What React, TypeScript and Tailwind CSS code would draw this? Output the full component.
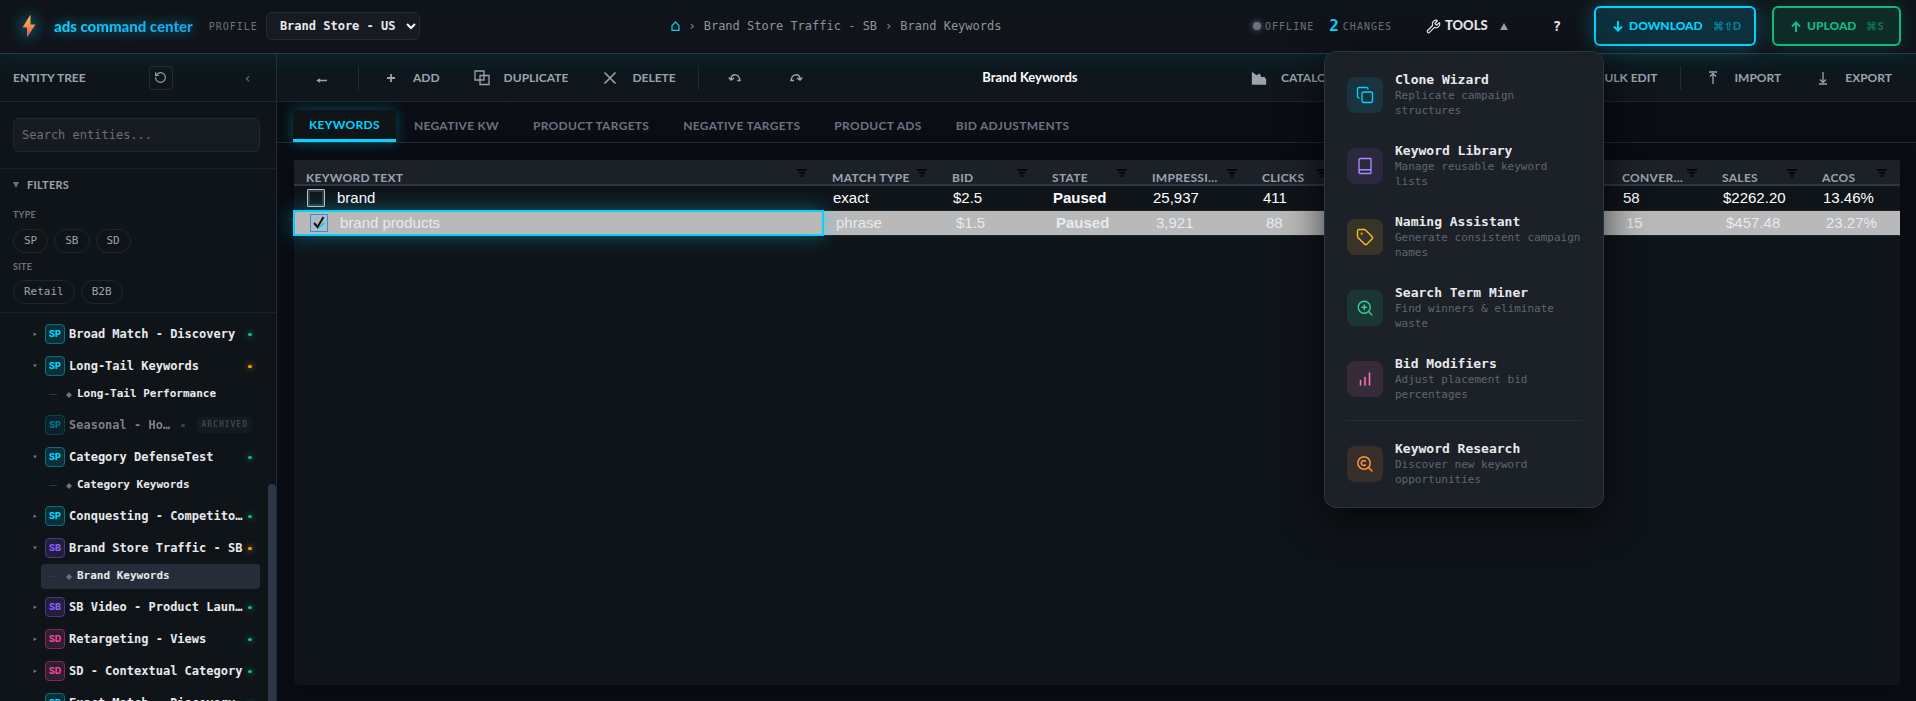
import React from 'react';
import { Wrench, Copy, Book, Tag, ZoomIn, RotateCcw } from 'lucide-react';
import clsx from 'clsx';

const mono = "font-['DejaVu_Sans_Mono',monospace]";

const Bolt = () => (
  <svg viewBox="0 0 14 24" className="h-6 w-[14px] drop-shadow-[0_0_8px_#00d4ff]">
    <defs>
      <linearGradient id="bolt" x1="0" y1="0" x2="0" y2="1">
        <stop offset="0" stopColor="#fbbf3c" />
        <stop offset="0.55" stopColor="#f9884a" />
        <stop offset="1" stopColor="#e5446d" />
      </linearGradient>
    </defs>
    <path d="M8.5 0.5 L0.5 13.5 H5 V23.5 L13.5 10.5 H8.5 Z" fill="url(#bolt)" />
  </svg>
);

const FilterIcon = () => (
  <svg viewBox="0 0 10 8" className="h-2 w-[10px]" stroke="#050608" strokeWidth="2">
    <path d="M0 1H10M2 4H8M3.5 7H6.5" />
  </svg>
);

const BarsIcon = () => (
  <svg viewBox="0 0 16 16" className="h-4 w-4" fill="none" stroke="currentColor" strokeWidth="1.6" strokeLinecap="round">
    <path d="M3.5 9.5V14M8 6.5V14M12.5 2V14" />
  </svg>
);

const ResearchIcon = () => (
  <svg viewBox="0 0 18 18" className="h-[18px] w-[18px]" fill="none" stroke="currentColor" strokeWidth="1.5" strokeLinecap="round">
    <circle cx="8" cy="8" r="6.2" />
    <path d="M12.6 12.6L16 16M9.3 6.2A2.4 2.4 0 1 0 9.3 9.9" />
  </svg>
);

const icons = {
  back: <path d="M3 10.5H13M3.5 10.5L5.5 9.3V11.7Z" />,
  add: <path d="M8 4V12M4 8H12" strokeWidth="1.8" />,
  duplicate: <path d="M1 1H10V10H1ZM6 5.5H15V14.5H6Z" />,
  del: <path d="M2.5 2.5L13.5 13.5M13.5 2.5L2.5 13.5" strokeWidth="1.6" />,
  undo: <path d="M4 9C4.5 3.5 12 3 13 10.5H10M1.8 7.5L4 10L7 8.2" strokeWidth="1.5" />,
  redo: <path d="M12 9C11.5 3.5 4 3 3 10.5H6M14.2 7.5L12 10L9 8.2" strokeWidth="1.5" />,
  catalog: <path d="M1.5 3L5.5 6L8.5 4.5L10 8L13 7.5L14.5 9.5V14H1.5Z" fill="currentColor" />,
  up: <path d="M4 2H12M8 14V3M8 3.5L5 6.5M8 3.5L11 6.5" />,
  down: <path d="M4 14H12M8 2V13M8 12.5L5 9.5M8 12.5L11 9.5" />,
};

type ToolProps = { icon: keyof typeof icons; label?: string; title?: string; className?: string };

const Tool = ({ icon, label, title, className }: ToolProps) => (
  <button
    type="button"
    aria-label={title}
    className={clsx(
      'flex h-8 items-center justify-center gap-[14px] text-xs font-bold text-[#9ca3af]',
      label ? 'pl-4 pr-[14px]' : 'w-[57px]',
      className,
    )}
  >
    <svg viewBox="0 0 16 16" className="h-4 w-4" fill="none" stroke="currentColor" strokeWidth="1.3">
      {icons[icon]}
    </svg>
    {label}
  </button>
);

const Separator = () => <div className="mx-1 h-6 w-px bg-[#222a33]" />;

const tools = [
  { title: 'Clone Wizard', text: 'Replicate campaign structures', icon: <Copy size={18} strokeWidth={1.8} />, tone: 'bg-[#1a343f] text-[#00d4ff]' },
  { title: 'Keyword Library', text: 'Manage reusable keyword lists', icon: <Book size={18} strokeWidth={1.8} />, tone: 'bg-[#2c2840] text-[#a78bfa]' },
  { title: 'Naming Assistant', text: 'Generate consistent campaign names', icon: <Tag size={18} strokeWidth={1.8} />, tone: 'bg-[#393428] text-[#fbbf24]' },
  { title: 'Search Term Miner', text: 'Find winners & eliminate waste', icon: <ZoomIn size={18} strokeWidth={1.8} />, tone: 'bg-[#1c3535] text-[#34d399]' },
  { title: 'Bid Modifiers', text: 'Adjust placement bid percentages', icon: <BarsIcon />, tone: 'bg-[#372a39] text-[#f472b6]' },
  { title: 'Keyword Research', text: 'Discover new keyword opportunities', icon: <ResearchIcon />, tone: 'bg-[#382e2a] text-[#fb923c]' },
];

const ToolsMenu = () => (
  <div className="absolute left-1/2 top-full z-20 mt-[7px] w-[280px] -translate-x-1/2 rounded-xl border border-[#2a3542] bg-[#1c2027] px-2 pb-2 pt-[7px] shadow-[0_10px_40px_#000000b0]">
    {tools.map((tool, i) => (
      <React.Fragment key={tool.title}>
        {i === 5 && <div className="mx-3 mb-[7px] mt-[6px] h-px bg-[#262c34]" />}
        <button type="button" className="flex h-[71px] w-full items-center gap-3 pl-[14px] pr-3 text-left">
          <span className={clsx('flex h-9 w-9 shrink-0 items-center justify-center rounded-lg', tool.tone)}>{tool.icon}</span>
          <span className={clsx('block', mono)}>
            <span className="block text-[13px] font-bold leading-4 text-[#e8eaed]">{tool.title}</span>
            <span className="block text-[11px] leading-[15px] text-[#5f6673]">{tool.text}</span>
          </span>
        </button>
      </React.Fragment>
    ))}
  </div>
);

const Header = () => (
  <header className="relative z-10 flex h-[54px] shrink-0 items-center justify-between border-b border-[#2d3748] bg-gradient-to-b from-[#0f1419] to-[#10141a] pb-px pl-[22px] pr-[15px] shadow-[0_4px_24px_#00d4ff14]">
    <div className="flex items-center">
      <Bolt />
      <span className="ml-[18px] bg-gradient-to-r from-[#00d4ff] to-[#1ba3ea] bg-clip-text text-[15px] font-black text-transparent drop-shadow-[0_0_6px_#00d4ff90]">
        ads command center
      </span>
      <label htmlFor="profile" className={clsx('ml-4 text-[10px] tracking-[1px] text-[#6b7280]', mono)}>PROFILE</label>
      <span className="relative ml-2">
        <select
          id="profile"
          className={clsx('h-7 w-[154px] appearance-none rounded-md border border-[#222b36] bg-[#161b22] pl-[13px] text-xs font-bold text-[#e8eaed]', mono)}
        >
          <option>Brand Store - US</option>
        </select>
        <svg viewBox="0 0 10 7" className="pointer-events-none absolute right-1 top-[11px] h-[7px] w-[10px]" fill="none" stroke="#fff" strokeWidth="2">
          <path d="M1 1L5 5L9 1" />
        </svg>
      </span>
    </div>

    <nav className={clsx('flex items-center gap-2 text-xs text-[#8d939e]', mono)}>
      <a href="#home" aria-label="Home">
        <svg viewBox="0 0 9 10" className="h-[10px] w-[9px]" fill="none" stroke="#00d4ff" strokeWidth="1.2">
          <path d="M1 9.3V4.5L4.5 1L8 4.5V9.3Z" />
        </svg>
      </a>
      <span>›</span>
      <a href="#campaign">Brand Store Traffic - SB</a>
      <span>›</span>
      <a href="#keywords">Brand Keywords</a>
    </nav>

    <div className="flex items-center">
      <span className="h-2 w-2 rounded-full bg-[#6b7280] shadow-[0_0_6px_#6b7280]" />
      <span className={clsx('ml-1 text-[10px] tracking-[1px] text-[#6b7280]', mono)}>OFFLINE</span>
      <span className={clsx('ml-[15px] text-base font-bold text-[#00d4ff]', mono)}>2</span>
      <span className={clsx('ml-1 text-[10px] tracking-[1px] text-[#6b7280]', mono)}>CHANGES</span>
      <div className="relative ml-5">
        <button type="button" className="flex h-9 w-[104px] items-center gap-1 pl-[14px] text-[13px] font-black text-[#e8eaed]">
          <Wrench size={15} strokeWidth={2} className="shrink-0" />
          TOOLS
          <svg viewBox="0 0 8 7" className="ml-2 h-[7px] w-2 shrink-0" fill="#9ca3af"><path d="M4 0L8 7H0Z" /></svg>
        </button>
        <ToolsMenu />
      </div>
      <button type="button" className={clsx('ml-5 h-9 w-[42px] text-sm font-bold text-[#e8eaed]', mono)}>?</button>
      <button type="button" className="ml-4 flex h-10 w-[162px] items-center gap-[6px] rounded-md border-2 border-[#00d4ff] bg-[#0c303c] pl-[17px] text-xs font-black text-[#00d4ff] shadow-[0_0_20px_#00d4ff50]">
        <svg viewBox="0 0 10 11" className="h-[11px] w-[10px]" fill="none" stroke="currentColor" strokeWidth="2"><path d="M5 0V9.5M1 5.5L5 9.5L9 5.5" /></svg>
        DOWNLOAD
        <span className="ml-1 text-[11px] opacity-50">⌘⇧D</span>
      </button>
      <button type="button" className="ml-4 flex h-10 w-[129px] items-center gap-[6px] rounded-md border-2 border-[#10b981] bg-[#0f2b28] pl-[17px] text-xs font-black text-[#10b981] shadow-[0_0_20px_#10b98135]">
        <svg viewBox="0 0 10 11" className="h-[11px] w-[10px]" fill="none" stroke="currentColor" strokeWidth="2"><path d="M5 11V1.5M1 5.5L5 1.5L9 5.5" /></svg>
        UPLOAD
        <span className="ml-1 text-[11px] opacity-50">⌘S</span>
      </button>
    </div>
  </header>
);

type Node = { name: string; type?: 'SP' | 'SB' | 'SD'; open?: boolean; status?: 'live' | 'warn' | 'archived'; selected?: boolean };

const tree: Node[] = [
  { name: 'Broad Match - Discovery', type: 'SP', status: 'live' },
  { name: 'Long-Tail Keywords', type: 'SP', open: true, status: 'warn' },
  { name: 'Long-Tail Performance' },
  { name: 'Seasonal - Ho…', type: 'SP', status: 'archived' },
  { name: 'Category DefenseTest', type: 'SP', open: true, status: 'live' },
  { name: 'Category Keywords' },
  { name: 'Conquesting - Competito…', type: 'SP', status: 'live' },
  { name: 'Brand Store Traffic - SB', type: 'SB', open: true, status: 'warn' },
  { name: 'Brand Keywords', selected: true },
  { name: 'SB Video - Product Laun…', type: 'SB', status: 'live' },
  { name: 'Retargeting - Views', type: 'SD', status: 'live' },
  { name: 'SD - Contextual Category', type: 'SD', status: 'live' },
  { name: 'Exact Match - Discovery', type: 'SP', status: 'live' },
];

const badgeTone = {
  SP: 'border-[#07707f] bg-[#0c2f38] text-[#00d4ff]',
  SB: 'border-[#4a3689] bg-[#221f3c] text-[#8b5cf6]',
  SD: 'border-[#7d2a59] bg-[#311c30] text-[#ec4899]',
};

const statusTone = {
  live: 'bg-[#10b981] shadow-[0_0_6px_#10b981]',
  warn: 'bg-[#f59e0b] shadow-[0_0_6px_#f59e0b]',
  archived: 'bg-[#6b7280]',
};

const TreeRow = ({ node }: { node: Node }) => {
  if (!node.type) {
    return (
      <li className={clsx('mb-[2px] ml-[41px] flex h-[25px] items-center rounded pl-2', node.selected && 'bg-[#262d38]')}>
        <span className="h-px w-2 bg-[#2d3748]" />
        <svg viewBox="0 0 6 6" className="ml-[9px] mr-[5px] h-[6px] w-[6px]" fill="#6b7280"><path d="M3 0L6 3L3 6L0 3Z" /></svg>
        <span className={clsx('text-[11px] font-bold text-[#e8eaed]', mono)}>{node.name}</span>
      </li>
    );
  }
  const archived = node.status === 'archived';
  return (
    <li className={clsx('flex h-8 items-center pl-8 pr-2', archived && 'opacity-50')}>
      <svg viewBox="0 0 6 6" className="mr-[7px] h-[6px] w-[6px]" fill="#6b7280">
        {!archived && <path d={node.open ? 'M1 1.5H5L3 4.5Z' : 'M1.5 1.5L5 3.2L1.5 5Z'} />}
      </svg>
      <span className={clsx("flex h-5 w-5 shrink-0 items-center justify-center rounded border font-['Inter',sans-serif] text-[9px] font-extrabold", badgeTone[node.type])}>
        {node.type}
      </span>
      <span className={clsx('ml-1 whitespace-nowrap text-xs font-bold text-[#e8eaed]', mono)}>{node.name}</span>
      <span className={clsx('h-[3px] w-1 shrink-0 rounded-full', archived ? 'ml-[11px]' : 'ml-auto', statusTone[node.status ?? 'live'])} />
      {archived && (
        <span className={clsx('ml-auto rounded bg-[#1c2128] px-1 py-[2px] text-[8px] font-bold leading-3 tracking-[1px] text-[#6b7280]', mono)}>ARCHIVED</span>
      )}
    </li>
  );
};

const Chip = ({ children }: { children: React.ReactNode }) => (
  <button type="button" className={clsx('h-6 rounded-full border border-[#1f2832] px-[10px] text-[11px] text-[#9ca3af]', mono)}>
    {children}
  </button>
);

const Sidebar = () => (
  <aside className="flex w-[277px] shrink-0 flex-col border-r border-[#222c38] bg-[#0f1419]">
    <div className="flex h-12 shrink-0 items-center justify-between border-b border-[#1e2630] bg-gradient-to-b from-[#0d171c] to-[#0f1419] pl-[13px] pr-6">
      <h2 className="text-xs font-bold text-[#9ca3af]">ENTITY TREE</h2>
      <button type="button" aria-label="Refresh" className="-ml-2 flex h-6 w-6 items-center justify-center rounded border border-[#222c36] text-[#9ca3af]">
        <RotateCcw size={13} strokeWidth={2} />
      </button>
      <button type="button" aria-label="Collapse" className={clsx('text-sm text-[#6b7280]', mono)}>‹</button>
    </div>
    <div className="shrink-0 border-b border-[#1a2129] px-4 py-4 pl-[13px]">
      <input
        type="search"
        aria-label="Search entities"
        placeholder="Search entities..."
        className={clsx('h-[34px] w-full rounded-md border border-[#202933] bg-[#161b22] px-2 text-xs text-[#9ca3af] placeholder:text-[#6d6f70]', mono)}
      />
    </div>
    <div className="shrink-0 border-b border-[#1a2129] pb-2 pl-[13px]">
      <button type="button" className="mt-2 flex h-4 items-center gap-2 text-[11px] font-bold tracking-wide text-[#9ca3af]">
        <svg viewBox="0 0 6 6" className="h-[6px] w-[6px]" fill="#6b7280"><path d="M0 0H6L3 6Z" /></svg>
        FILTERS
      </button>
      <div className="mt-4 text-[9px] font-bold leading-3 tracking-wide text-[#6b7280]">TYPE</div>
      <div className="mt-2 flex gap-[6px]"><Chip>SP</Chip><Chip>SB</Chip><Chip>SD</Chip></div>
      <div className="mt-2 text-[9px] font-bold leading-3 tracking-wide text-[#6b7280]">SITE</div>
      <div className="mt-[7px] flex gap-[6px]"><Chip>Retail</Chip><Chip>B2B</Chip></div>
    </div>
    <div className="flex min-h-0 flex-1 overflow-hidden">
      <ul className="min-w-0 flex-1 pr-2 pt-[5px]">
        {tree.map((node) => <TreeRow key={node.name} node={node} />)}
      </ul>
      <div className="flex w-2 flex-col justify-end">
        <div className="h-[56%] rounded-t bg-[#2d3748]" />
      </div>
    </div>
  </aside>
);

const Toolbar = () => (
  <div className="flex h-12 shrink-0 items-center justify-between border-b border-[#1e2630] bg-gradient-to-b from-[#0c181d] to-[#11151b] pl-4 pr-[10px]">
    <div className="flex items-center gap-1">
      <Tool icon="back" title="Back" />
      <Separator />
      <Tool icon="add" label="ADD" />
      <Tool icon="duplicate" label="DUPLICATE" />
      <Tool icon="del" label="DELETE" />
      <Separator />
      <Tool icon="undo" title="Undo" />
      <Tool icon="redo" title="Redo" />
    </div>
    <h1 className="text-[13px] font-bold text-white">Brand Keywords</h1>
    <div className="flex items-center gap-1">
      <Tool icon="catalog" label="CATALOG" />
      <Tool icon="duplicate" label="BULK EDIT" className="ml-[197px]" />
      <Separator />
      <Tool icon="up" label="IMPORT" />
      <Tool icon="down" label="EXPORT" />
    </div>
  </div>
);

const tabs = ['KEYWORDS', 'NEGATIVE KW', 'PRODUCT TARGETS', 'NEGATIVE TARGETS', 'PRODUCT ADS', 'BID ADJUSTMENTS'];

const Tabs = () => (
  <div className="flex h-[41px] shrink-0 items-end gap-[2px] border-b border-[#1e2a33] pl-4">
    {tabs.map((tab, i) => (
      <button
        key={tab}
        type="button"
        className={clsx(
          'h-8 px-4 text-xs font-bold tracking-wide',
          i === 0
            ? 'rounded-t border-b-[3px] border-[#00d4ff] bg-[#0f1419] text-[#00d4ff] shadow-[0_0_14px_#00d4ff50]'
            : 'text-[#6b7280]',
        )}
      >
        {tab}
      </button>
    ))}
  </div>
);

const columns = [
  { label: 'KEYWORD TEXT' },
  { label: 'MATCH TYPE', width: 'w-[120px]' },
  { label: 'BID', width: 'w-[100px]' },
  { label: 'STATE', width: 'w-[100px]' },
  { label: 'IMPRESSI…', width: 'w-[110px]' },
  { label: 'CLICKS', width: 'w-[90px]' },
  { label: '', width: 'w-[270px]' },
  { label: 'CONVER…', width: 'w-[100px]' },
  { label: 'SALES', width: 'w-[100px]' },
  { label: 'ACOS', width: 'w-[90px]' },
];

const rows = [
  { selected: false, cells: ['brand', 'exact', '$2.5', 'Paused', '25,937', '411', '', '58', '$2262.20', '13.46%'] },
  { selected: true, cells: ['brand products', 'phrase', '$1.5', 'Paused', '3,921', '88', '', '15', '$457.48', '23.27%'] },
];

const KeywordTable = () => (
  <div className="mx-4 mb-4 ml-[17px] mt-[17px] flex-1 rounded-sm bg-[#0f1419] shadow-[0_4px_20px_#00000060]">
    <table className="w-full table-fixed border-separate border-spacing-0">
      <thead>
        <tr className="bg-[#1c2128]">
          {columns.map((col) => (
            <th key={col.label} scope="col" className={clsx('h-[26px] border-b-2 border-[#2d3748] p-0 pl-3 text-left', col.width)}>
              <div className="flex h-6 items-end justify-between pr-[13px]">
                <span className="text-xs font-bold leading-3 tracking-wide text-[#9ca3af]">{col.label}</span>
                {col.label && <span className="mb-[7px]"><FilterIcon /></span>}
              </div>
            </th>
          ))}
        </tr>
      </thead>
      <tbody className="font-['Liberation_Sans',Arial,sans-serif] text-[15px] leading-6">
        {rows.map((row) => (
          <tr key={row.cells[0]} className={row.selected ? 'bg-[#b9b9b9] text-[#e8eaed]' : 'text-white'}>
            {row.cells.map((cell, i) => (
              <td
                key={i}
                className={clsx(
                  'h-[25px] border-b border-[#19242a] p-0',
                  row.selected ? 'pl-4' : 'pl-[13px]',
                  i === 0 && 'relative',
                  i === 3 && 'font-bold',
                )}
              >
                {i === 0 ? (
                  <>
                    {row.selected && (
                      <span className="pointer-events-none absolute -bottom-px -left-px -right-1 -top-px border-2 border-[#00d4ff] shadow-[0_0_20px_#00d4ff60]" />
                    )}
                    <label className="flex items-center gap-3">
                      <span className="relative flex h-[18px] w-[18px]">
                        <input
                          type="checkbox"
                          defaultChecked={row.selected}
                          className={clsx(
                            'h-[18px] w-[18px] appearance-none border',
                            row.selected ? 'border-[#2196f3]' : 'rounded-[1px] border-[#c0c2c4] shadow-[inset_0_0_0_2px_#33383d]',
                          )}
                        />
                        {row.selected && (
                          <svg viewBox="0 0 18 18" className="pointer-events-none absolute inset-0" fill="none">
                            <path d="M7.5 14.5L14.5 9" stroke="#00d4ff" strokeWidth="2" />
                            <path d="M4 9L7.5 13L13.5 3" stroke="#0f1419" strokeWidth="2" />
                          </svg>
                        )}
                      </span>
                      {cell}
                    </label>
                  </>
                ) : (
                  cell
                )}
              </td>
            ))}
          </tr>
        ))}
      </tbody>
    </table>
  </div>
);

const App = () => {
  return (
    <div className="flex h-screen flex-col overflow-hidden bg-[#0a0d14] font-['Lato',sans-serif] text-[#e8eaed]">
      <Header />
      <div className="flex min-h-0 flex-1">
        <Sidebar />
        <main className="flex min-w-0 flex-1 flex-col">
          <Toolbar />
          <Tabs />
          <KeywordTable />
        </main>
      </div>
    </div>
  );
};

export default App;
